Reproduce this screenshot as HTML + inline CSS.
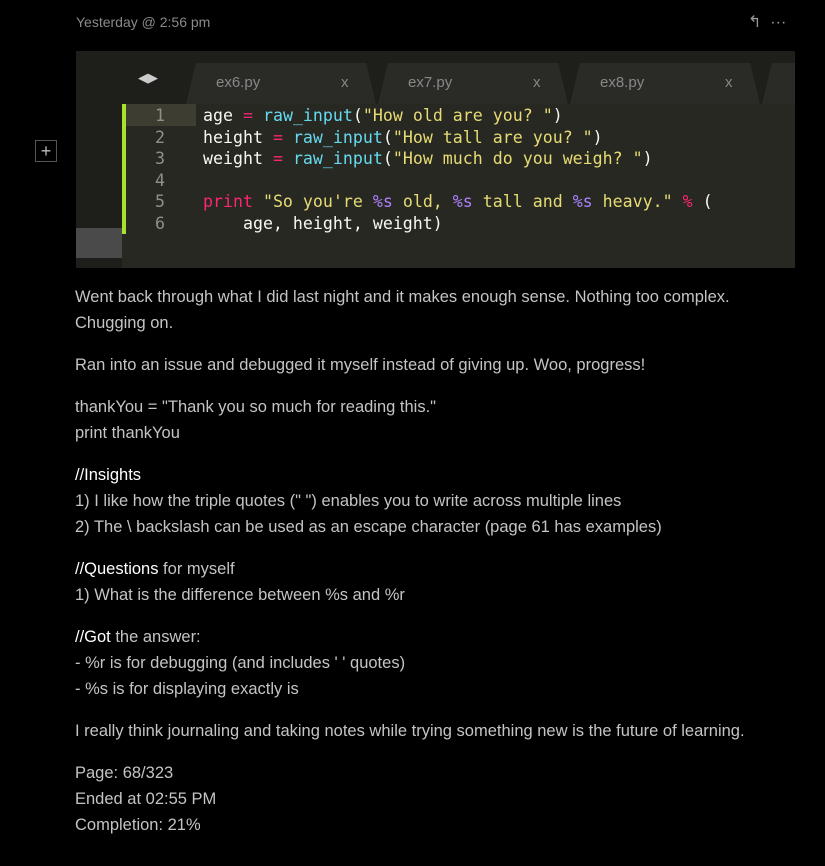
<!DOCTYPE html>
<html><head><meta charset="utf-8"><style>
body{margin:0;background:#000;width:825px;height:866px;overflow:hidden;font-family:"Liberation Sans",sans-serif;}
.date{position:absolute;left:76px;top:14px;font-size:14px;color:#8a8a8a;}
.icons{position:absolute;left:748px;top:12px;color:#999;font-size:16px;}
.plus{position:absolute;left:35px;top:140px;width:22px;height:22px;border:1px solid #555;color:#bbb;font-size:18px;line-height:21px;text-align:center;box-sizing:border-box;}
.img{position:absolute;left:76px;top:51px;width:719px;height:217px;background:#1e1f1b;overflow:hidden;}
.code{position:absolute;left:46px;top:53px;right:0;bottom:0;background:#272822;}
.bar{position:absolute;left:46px;top:53px;width:4px;height:130px;background:#a6e22e;}
.grey{position:absolute;left:0;top:177px;width:46px;height:30px;background:#4a4a4a;}
.tab{position:absolute;top:12px;height:41px;width:190px;background:#2a2b26;clip-path:polygon(10px 0,180px 0,190px 41px,0 41px);color:#888;font-size:15px;}
.tab span{position:absolute;top:11px;}
.ln{position:absolute;width:20px;left:28px;text-align:center;color:#8f908a;}
.mono{font-family:"DejaVu Sans Mono","Liberation Mono",monospace;font-size:16.6px;}
.line{position:absolute;color:#f8f8f2;white-space:pre;}
.k{color:#f92672}.f{color:#66d9ef}.s{color:#e6db74}.p{color:#ae81ff}
.txt{position:absolute;left:75px;top:284px;width:720px;font-size:16.5px;line-height:26px;color:#c4c4c4;}
.txt p{margin:0 0 16px}
b{color:#fff;font-weight:normal}
</style></head><body>
<div class="date">Yesterday @ 2:56 pm</div>
<div class="icons">&#8624;&nbsp;&nbsp;···</div>
<div class="plus">+</div>
<div class="img">
 <div style="position:absolute;left:62px;top:19px;color:#ccc;font-size:13px">◀▶</div>
 <div class="tab" style="left:110px"><span style="left:30px">ex6.py</span><span style="left:155px">x</span></div>
 <div class="tab" style="left:302px"><span style="left:30px">ex7.py</span><span style="left:155px">x</span></div>
 <div class="tab" style="left:494px"><span style="left:30px">ex8.py</span><span style="left:155px">x</span></div>
 <div class="tab" style="left:686px"></div>
 <div class="grey"></div>
 <div class="code mono">
  <div style="position:absolute;left:4px;top:0;width:70px;height:22px;background:#3e3d32"></div>
  <div class="ln" style="top:2px">1</div><div class="ln" style="top:24px">2</div><div class="ln" style="top:45px">3</div><div class="ln" style="top:67px">4</div><div class="ln" style="top:88px">5</div><div class="ln" style="top:110px">6</div>
  <div class="line" style="left:81px;top:2px">age <span class="k">=</span> <span class="f">raw_input</span>(<span class="s">"How old are you? "</span>)</div>
  <div class="line" style="left:81px;top:24px">height <span class="k">=</span> <span class="f">raw_input</span>(<span class="s">"How tall are you? "</span>)</div>
  <div class="line" style="left:81px;top:45px">weight <span class="k">=</span> <span class="f">raw_input</span>(<span class="s">"How much do you weigh? "</span>)</div>
  <div class="line" style="left:81px;top:88px"><span class="k">print</span> <span class="s">"So you're <span class="p">%s</span> old, <span class="p">%s</span> tall and <span class="p">%s</span> heavy."</span> <span class="k">%</span> (</div>
  <div class="line" style="left:81px;top:110px">    age, height, weight)</div>
 </div>
 <div class="bar"></div>
</div>
<div class="txt">
<p>Went back through what I did last night and it makes enough sense. Nothing too complex.<br>Chugging on.</p>
<p>Ran into an issue and debugged it myself instead of giving up. Woo, progress!</p>
<p>thankYou = "Thank you so much for reading this."<br>print thankYou</p>
<p><b>//Insights</b><br>1) I like how the triple quotes (" ") enables you to write across multiple lines<br>2) The \ backslash can be used as an escape character (page 61 has examples)</p>
<p><b>//Questions</b> for myself<br>1) What is the difference between %s and %r</p>
<p><b>//Got</b> the answer:<br>- %r is for debugging (and includes ' ' quotes)<br>- %s is for displaying exactly is</p>
<p>I really think journaling and taking notes while trying something new is the future of learning.</p>
<p>Page: 68/323<br>Ended at 02:55 PM<br>Completion: 21%</p>
</div>
</body></html>
